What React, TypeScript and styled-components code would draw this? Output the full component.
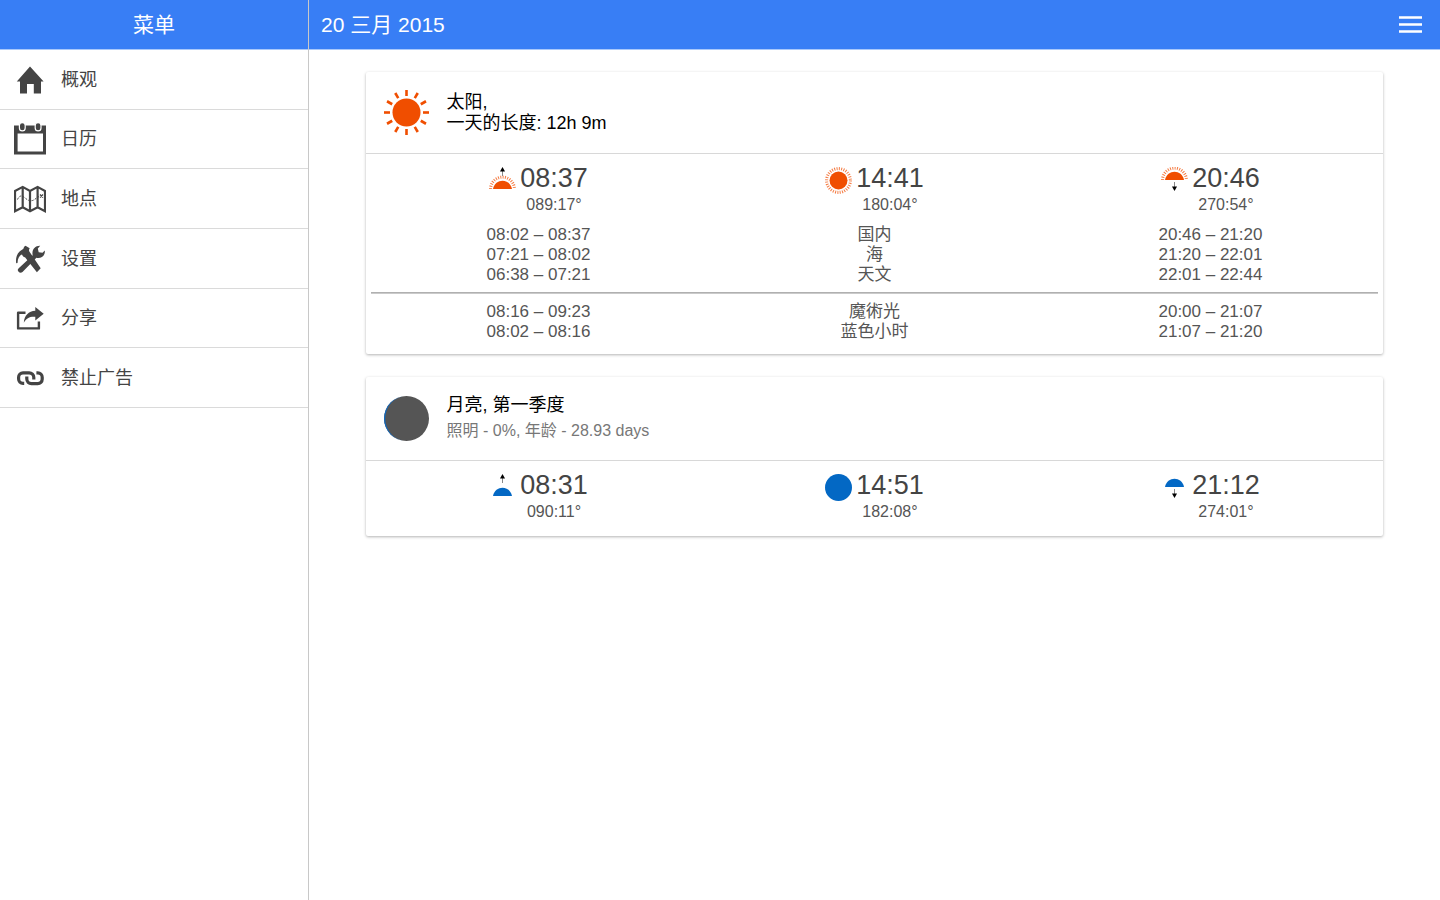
import React from 'react';
import styled, { createGlobalStyle } from 'styled-components';

const GlobalStyle = createGlobalStyle`
  * { box-sizing: border-box; }
  body {
    margin: 0;
    background: #fff;
    color: #444;
    font-family: "Liberation Sans", "Noto Sans CJK SC", sans-serif;
    font-size: 18px;
  }
  h1, h2, p { margin: 0; font-weight: 400; }
`;

const Page = styled.div`
  display: grid;
  grid-template-columns: 309px 1fr;
  min-height: 100vh;
`;

const Sidebar = styled.aside`
  border-right: 1px solid #c8c8c8;
`;

const Bar = styled.header<{ $centered?: boolean }>`
  display: flex;
  align-items: center;
  justify-content: ${(p) => (p.$centered ? 'center' : 'space-between')};
  height: 50px;
  padding: 0 18px 0 ${(p) => (p.$centered ? '18px' : '12px')};
  background: #387ef5;
  border-bottom: 1px solid #a9c8fb;
  color: #fff;
`;

const BarTitle = styled.h1`
  font-size: 21px;
  line-height: 48px;
`;

const MenuButton = styled.button`
  display: flex;
  padding: 0;
  border: 0;
  background: none;
  color: inherit;
  cursor: pointer;
`;

const Menu = styled.nav`
  display: grid;
  grid-auto-rows: 1fr;
  min-height: 358px;
`;

const MenuLink = styled.a`
  display: flex;
  align-items: center;
  gap: 15px;
  padding: 1px 14px 0;
  border-bottom: 1px solid #dadada;
  color: #444;
  line-height: 24px;
  text-decoration: none;
`;

const Cards = styled.main`
  display: flex;
  flex-direction: column;
  gap: 23px;
  padding: 22px 5%;
`;

const Card = styled.section`
  border-radius: 2px;
  background: #fff;
  box-shadow: 0 1px 3px rgba(0, 0, 0, 0.3);
`;

const CardHeader = styled.div`
  display: flex;
  align-items: center;
  gap: 18px;
  padding: 18px;
  border-bottom: 1px solid #d8d8d8;
`;

const CardTitle = styled.h2`
  color: #000;
  font-size: 18px;
  line-height: 21px;
`;

const CardNote = styled.p`
  margin-top: 4px;
  color: #777;
  font-size: 16px;
  line-height: 22px;
`;

const CardBody = styled.div`
  padding: 9px 5px 12px;
`;

const Events = styled.div`
  display: grid;
  grid-template-columns: repeat(3, 1fr);
`;

const Event = styled.div`
  display: flex;
  justify-content: center;
  gap: 4px;
`;

const EventIcon = styled.svg`
  width: 27px;
  height: 27px;
  margin-top: 4px;
`;

const EventText = styled.div`
  text-align: center;
`;

const Time = styled.p`
  font-size: 27px;
  line-height: 30px;
`;

const Azimuth = styled.p`
  color: #555;
  font-size: 16px;
  line-height: 24px;
`;

const Phases = styled.table`
  width: 100%;
  margin-top: 8px;
  border-collapse: collapse;
  table-layout: fixed;
  color: #555;
  font-size: 17px;
  line-height: 20px;
  text-align: center;

  td, th { padding: 0; height: 20px; font-weight: 400; }
`;

const Divider = styled.hr`
  height: 2px;
  margin: 7px 0 0;
  border: 0;
  border-top: 1px solid #b0b0b0;
  background: #cacaca;
`;

const HomeIcon = () => (
  <svg width="32" height="32" fill="#444" aria-hidden="true">
    <path d="M16 2.5 29.6 17.5H27V29.5H19.8V20H13V29.5H6V17.5H2.8Z" />
  </svg>
);

const CalendarIcon = () => (
  <svg width="32" height="32" aria-hidden="true">
    <path fill="#444" fillRule="evenodd" d="M0 2.5H32V31.5H0ZM3.6 10.5V28.6H29V10.5Z" />
    <g fill="#444" stroke="#fff" strokeWidth="1.2">
      <rect x="5.4" y="-.4" width="5.8" height="8.2" rx="2.9" />
      <rect x="21.2" y="-.4" width="5.8" height="8.2" rx="2.9" />
    </g>
  </svg>
);

const MapIcon = () => (
  <svg width="32" height="32" fill="none" stroke="#444" aria-hidden="true">
    <path strokeWidth="2.2" d="M1 8 8.7 3.9 16 8 23.6 3.9 31 8V28.3L23.6 24.2 16 28.3 8.7 24.2 1 28.3ZM8.7 4V24M16 8V28M23.6 4V24" />
    <path strokeWidth="1" strokeDasharray="2 1.4" d="M3.5 16.5C5.5 12 8 12.5 10.5 14.5S15 18.5 18.5 17.5 22 14 27 13" />
    <path strokeWidth="1.2" d="m26 11.5 3 3m0-3-3 3" />
  </svg>
);

const ToolsIcon = () => (
  <svg width="32" height="32" fill="#444" aria-hidden="true">
    <path d="M2.2 20.2C1.6 16 2.4 11.6 5.6 8.6 7.4 6.9 9 6.3 9.7 5.2 9.6 4.2 10.4 3.2 11.5 2.7L15.7 5.3C14.8 6.6 14.8 7.7 15.5 8.7L26.7 25.3 22.9 29.3 11 14.2C9.4 14.3 8.6 13 8 11.6 5.2 12.5 3.7 15.6 3.5 20Z" />
    <path d="M4.6 28.8C3.3 27.6 3.6 26.3 4.7 25.2L18.7 12.3C17.5 7.4 20.6 2.6 26.2 2.8L23.8 5.6 24.7 9.2 28.5 9.8 30.8 7.5C31.5 12.7 27 15.9 22.4 14.8L8.5 28.9C7.2 30 5.8 30 4.6 28.8Z" />
  </svg>
);

const ShareIcon = () => (
  <svg width="32" height="32" aria-hidden="true">
    <path fill="none" stroke="#444" strokeWidth="2.4" strokeLinejoin="round" d="M11.5 10.8H4.1V26.4H24.9V19.5" />
    <path fill="#444" d="M21.3 5 29.7 11.8 21.3 18.5V14.8C16 14.3 12.5 16 9.8 20.7 10.4 13.6 14.5 9.2 21.3 8.8Z" />
  </svg>
);

const LinkIcon = () => (
  <svg width="32" height="32" fill="none" stroke="#444" strokeWidth="3.2" aria-hidden="true">
    <path d="M10.2 21.4H9A4.4 4.4 0 0 1 4.6 17V15.2A4.4 4.4 0 0 1 9 10.8H15.2A4.6 4.6 0 0 1 19.8 15.4V17.6" />
    <path d="M22.4 10.8H23.8A4.4 4.4 0 0 1 28.2 15.2V17.2A4.4 4.4 0 0 1 23.8 21.6H17.4A4.6 4.6 0 0 1 12.8 17V14.6" />
  </svg>
);

const MenuLines = () => (
  <svg width="23" height="17" stroke="currentColor" strokeWidth="2.6" aria-hidden="true">
    <path d="M0 1.5H23M0 8.5H23M0 15.5H23" />
  </svg>
);

const SunAvatar = () => (
  <svg width="45" height="45" aria-hidden="true">
    <circle cx="22.5" cy="22.5" r="14" fill="#f04e00" />
    <g stroke="#f04e00" strokeWidth="2.6">
      {Array.from({ length: 12 }, (_, i) => (
        <path key={i} d="M22.5 0V6" transform={`rotate(${i * 30} 22.5 22.5)`} />
      ))}
    </g>
  </svg>
);

const MoonAvatar = () => (
  <svg width="45" height="45" aria-hidden="true">
    <circle cx="22.5" cy="22.5" r="22.5" fill="#555" />
    <path fill="#0a68c4" d="M22.5 0A22.5 22.5 0 0 0 22.5 45A21.3 22.5 0 0 1 22.5 0Z" />
  </svg>
);

type Body = 'sun' | 'moon';
type Stage = 'rise' | 'noon' | 'set';

const SUN = '#f04e00';
const MOON = '#0368c4';

const StageIcon = ({ body, stage }: { body: Body; stage: Stage }) => {
  const fill = body === 'sun' ? SUN : MOON;
  if (stage === 'noon') {
    return (
      <EventIcon viewBox="0 0 27 27" aria-hidden="true">
        <circle cx="13.5" cy="13.5" r={body === 'sun' ? 9 : 13.5} fill={fill} />
        {body === 'sun' && (
          <circle cx="13.5" cy="13.5" r="11.9" fill="none" stroke={fill} strokeOpacity=".75" strokeWidth="3" strokeDasharray="1 1.337" />
        )}
      </EventIcon>
    );
  }
  const y = stage === 'rise' ? 22 : 13;
  return (
    <EventIcon viewBox="0 0 27 27" aria-hidden="true">
      <path fill={fill} d={`M4 ${y}C6 ${y - 11} 21 ${y - 11} 23 ${y}Z`} />
      {body === 'sun' && (
        <path fill="none" stroke={fill} strokeOpacity=".75" strokeWidth="3" strokeDasharray="1 1.337" d={`M1.6 ${y}A11.9 11.9 0 0 1 25.4 ${y}`} />
      )}
      {stage === 'rise' ? (
        <>
          <path stroke="#888" d="M13.5 4V9" />
          <path d="M13.5 0 16 4.5H11Z" />
        </>
      ) : (
        <>
          <path stroke="#888" d="M13.5 15V20" />
          <path d="M13.5 24 16 19.5H11Z" />
        </>
      )}
    </EventIcon>
  );
};

type EventData = { stage: Stage; time: string; azimuth: string };

const EventRow = ({ body, events }: { body: Body; events: EventData[] }) => (
  <Events>
    {events.map((e) => (
      <Event key={e.stage}>
        <StageIcon body={body} stage={e.stage} />
        <EventText>
          <Time>{e.time}</Time>
          <Azimuth>{e.azimuth}</Azimuth>
        </EventText>
      </Event>
    ))}
  </Events>
);

const PhaseTable = ({ rows }: { rows: string[][] }) => (
  <Phases>
    <tbody>
      {rows.map(([morning, name, evening]) => (
        <tr key={name}>
          <td>{morning}</td>
          <th scope="row">{name}</th>
          <td>{evening}</td>
        </tr>
      ))}
    </tbody>
  </Phases>
);

const menuItems = [
  { label: '概观', Icon: HomeIcon },
  { label: '日历', Icon: CalendarIcon },
  { label: '地点', Icon: MapIcon },
  { label: '设置', Icon: ToolsIcon },
  { label: '分享', Icon: ShareIcon },
  { label: '禁止广告', Icon: LinkIcon },
];

const sunEvents: EventData[] = [
  { stage: 'rise', time: '08:37', azimuth: '089:17°' },
  { stage: 'noon', time: '14:41', azimuth: '180:04°' },
  { stage: 'set', time: '20:46', azimuth: '270:54°' },
];

const moonEvents: EventData[] = [
  { stage: 'rise', time: '08:31', azimuth: '090:11°' },
  { stage: 'noon', time: '14:51', azimuth: '182:08°' },
  { stage: 'set', time: '21:12', azimuth: '274:01°' },
];

const twilight = [
  ['08:02 – 08:37', '国内', '20:46 – 21:20'],
  ['07:21 – 08:02', '海', '21:20 – 22:01'],
  ['06:38 – 07:21', '天文', '22:01 – 22:44'],
];

const photoHours = [
  ['08:16 – 09:23', '魔術光', '20:00 – 21:07'],
  ['08:02 – 08:16', '蓝色小时', '21:07 – 21:20'],
];

export default function App() {
  return (
    <>
      <GlobalStyle />
      <Page lang="zh-CN">
        <Sidebar>
          <Bar $centered>
            <BarTitle>菜单</BarTitle>
          </Bar>
          <Menu>
            {menuItems.map(({ label, Icon }) => (
              <MenuLink href="#" key={label}>
                <Icon />
                {label}
              </MenuLink>
            ))}
          </Menu>
        </Sidebar>
        <div>
          <Bar>
            <BarTitle>20 三月 2015</BarTitle>
            <MenuButton type="button" aria-label="菜单">
              <MenuLines />
            </MenuButton>
          </Bar>
          <Cards>
            <Card>
              <CardHeader>
                <SunAvatar />
                <CardTitle>
                  太阳,
                  <br />
                  一天的长度: 12h 9m
                </CardTitle>
              </CardHeader>
              <CardBody>
                <EventRow body="sun" events={sunEvents} />
                <PhaseTable rows={twilight} />
                <Divider />
                <PhaseTable rows={photoHours} />
              </CardBody>
            </Card>
            <Card>
              <CardHeader>
                <MoonAvatar />
                <div>
                  <CardTitle>月亮, 第一季度</CardTitle>
                  <CardNote>照明 - 0%, 年龄 - 28.93 days</CardNote>
                </div>
              </CardHeader>
              <CardBody>
                <EventRow body="moon" events={moonEvents} />
              </CardBody>
            </Card>
          </Cards>
        </div>
      </Page>
    </>
  );
}
